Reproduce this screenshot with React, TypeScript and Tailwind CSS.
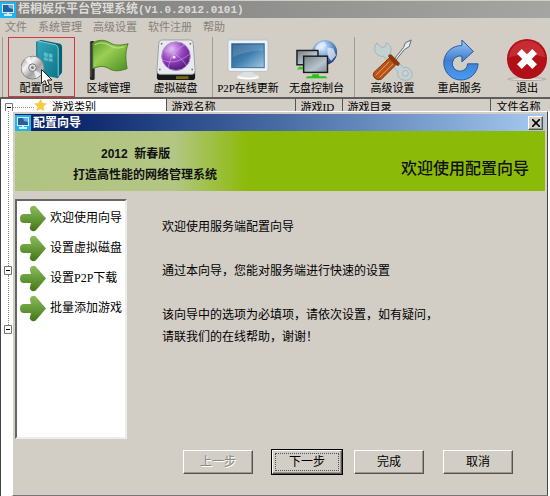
import React from 'react'

const MENUS = ['文件', '系统管理', '高级设置', '软件注册', '帮助']

const STEPS = ['欢迎使用向导', '设置虚拟磁盘', '设置P2P下载', '批量添加游戏']

const AppIcon: React.FC = () => (
  <svg className="size-4 shrink-0" viewBox="0 0 16 16" aria-hidden="true">
    <rect width="16" height="16" fill="#1fb4f0" />
    <rect x="2" y="2" width="12" height="9" fill="#d5ecf8" />
    <rect x="3" y="3" width="10" height="7" fill="#24609c" />
    <path d="M8 3h5v4L9 6z" fill="#79aad2" />
    <path d="M7 11h2v1h3v2H4v-2h3z" fill="#d5ecf8" />
  </svg>
)

const WizardIcon: React.FC = () => (
  <svg className="size-[42px]" viewBox="0 0 44 44" aria-hidden="true">
    <defs>
      <linearGradient id="box" x1="0" y1="0" x2="1" y2="1">
        <stop offset="0" stopColor="#35a9bb" />
        <stop offset="1" stopColor="#0c7488" />
      </linearGradient>
      <linearGradient id="disc" x1="0" y1="0" x2="1" y2="1">
        <stop offset="0" stopColor="#8f8f8f" />
        <stop offset="0.35" stopColor="#f4f4f4" />
        <stop offset="0.6" stopColor="#a2a2a2" />
        <stop offset="1" stopColor="#e4e4e4" />
      </linearGradient>
    </defs>
    <path d="M16 3l5-2 20 4q2 1 2 3v27l-4 5-23-4z" fill="#086074" />
    <path d="M17 2l19 4q3 1 3 4v31l-22-4z" fill="url(#box)" />
    <path d="M18 2l18 4q3 1 3 4v29" fill="none" stroke="#8ad6df" />
    <path d="M24 14l4 1v4l-4-1zM29 15l4 1v4l-4-1zM24 19l4 1v3l-4-1zM29 20l4 1v3l-4-1z" fill="#5dbcca" />
    <circle cx="12" cy="30" r="12" fill="url(#disc)" stroke="#858585" />
    <path d="M12 30L4 21l5-3zM12 30l9 7-5 4z" fill="#fff" opacity=".7" />
    <circle cx="12" cy="30" r="4" fill="#ddd" stroke="#777" />
    <circle cx="12" cy="30" r="1.5" fill="#777" />
  </svg>
)

const FlagIcon: React.FC = () => (
  <svg className="size-[42px]" viewBox="0 0 44 44" aria-hidden="true">
    <defs>
      <linearGradient id="flag" x1="0" y1="0" x2="1" y2="1">
        <stop offset="0" stopColor="#5b9a2c" />
        <stop offset="0.4" stopColor="#9bce55" />
        <stop offset="1" stopColor="#4a8d1e" />
      </linearGradient>
    </defs>
    <rect x="2" y="2" width="5" height="41" rx="2" fill="#252525" />
    <path d="M3 4v36" stroke="#666" />
    <path d="M5 4c8-4 13-3 18 0s10 3 19 1c-3 8-3 15-1 26-8 3-14 3-19 0s-10-3-17 0z" fill="url(#flag)" stroke="#457f1b" />
    <path d="M7 6c6-3 11-2 16 1s9 3 15 1" fill="none" stroke="#c3e595" />
  </svg>
)

const DriveIcon: React.FC = () => (
  <svg className="size-[42px]" viewBox="0 0 44 44" aria-hidden="true">
    <defs>
      <radialGradient id="orb" cx=".35" cy=".25" r=".8">
        <stop offset="0" stopColor="#e3c0f5" />
        <stop offset="0.5" stopColor="#9445bd" />
        <stop offset="1" stopColor="#4c1678" />
      </radialGradient>
    </defs>
    <path d="M2 33h40v7q0 3-3 3H5q-3 0-3-3z" fill="#171717" />
    <rect x="22" y="39" width="13" height="3" fill="#756619" />
    <path d="M7 1h30q2 0 3 3l2 29q0 4-3 4H5q-3 0-3-4L4 4q1-3 3-3z" fill="#e8ebed" stroke="#9ba0a4" />
    <circle cx="7" cy="5" r="1" fill="#777" />
    <circle cx="37" cy="5" r="1" fill="#777" />
    <circle cx="5" cy="32" r="1" fill="#777" />
    <circle cx="39" cy="32" r="1" fill="#777" />
    <circle cx="22" cy="18" r="15" fill="url(#orb)" stroke="#b98bd0" />
    <path d="M10 12c8 1 18 7 23 16M14 30c1-9 7-19 17-24M8 22c9 4 18 2 28-6" fill="none" stroke="#dba9f3" opacity=".6" />
    <circle cx="20" cy="19" r="1.5" fill="#f3ddff" />
  </svg>
)

const MonitorIcon: React.FC = () => (
  <svg className="size-[42px]" viewBox="0 0 44 44" aria-hidden="true">
    <defs>
      <linearGradient id="screen" x1="0" y1="0" x2="1" y2="1">
        <stop offset="0" stopColor="#1f5786" />
        <stop offset="0.5" stopColor="#3f7faf" />
        <stop offset="1" stopColor="#a2cae4" />
      </linearGradient>
    </defs>
    <path d="M17 32h10v4l6 2v3H11v-3l6-2z" fill="#dce0e3" />
    <path d="M11 40q11 3 22 0" stroke="#fff" strokeWidth="2" fill="none" />
    <rect x="1" y="1" width="42" height="33" rx="2" fill="#edf2f5" stroke="#b8c2c9" />
    <rect x="5" y="5" width="34" height="25" fill="url(#screen)" stroke="#386c94" />
    <path d="M6 6h32v6Q22 12 6 19z" fill="#fff" opacity=".15" />
  </svg>
)

const ConsoleIcon: React.FC = () => (
  <svg className="size-[42px]" viewBox="0 0 44 44" aria-hidden="true">
    <defs>
      <radialGradient id="globe" cx=".4" cy=".3" r=".7">
        <stop offset="0" stopColor="#e1f1ff" />
        <stop offset="0.5" stopColor="#7ba9db" />
        <stop offset="1" stopColor="#203f87" />
      </radialGradient>
      <linearGradient id="panel" x1="0" y1="0" x2="1" y2="1">
        <stop offset="0" stopColor="#737c84" />
        <stop offset="0.6" stopColor="#b8c5ce" />
        <stop offset="1" stopColor="#7f8a94" />
      </linearGradient>
    </defs>
    <circle cx="30" cy="14" r="13" fill="url(#globe)" />
    <path d="M21 8q4-5 9-5l2 4-5 2-3 5-5 2zM33 9l6 1 3 7-5 6-4-5z" fill="#e9f2f7" opacity=".7" />
    <path d="M3 29h6v3H1z" fill="#38cc22" />
    <rect x="1" y="12" width="22" height="15" fill="url(#panel)" stroke="#1b1b1b" strokeWidth="1.5" />
    <rect x="8" y="18" width="25" height="17" fill="url(#panel)" stroke="#1b1b1b" strokeWidth="1.5" />
    <path d="M17 37h7v2h7l2 2H10l2-2h5z" fill="#24c514" />
  </svg>
)

const ToolsIcon: React.FC = () => (
  <svg className="size-[42px]" viewBox="0 0 44 44" aria-hidden="true">
    <path d="M5 4l5 5 4-1 1-4c5 2 6 7 4 11l14 15c6-1 10 3 9 9-1 3-5 5-9 4-5-1-7-5-6-9L12 18c-6 1-10-4-9-10z" fill="#c3d1d3" stroke="#9fb4b8" />
    <circle cx="35" cy="36" r="3" fill="#d6d2cb" stroke="#9fb4b8" />
    <path d="M24 20L33 9l2-5 6-3-2 7-5 3-9 11z" fill="#e5edef" stroke="#59696c" />
    <path d="M19 18l8 8" stroke="#8d3709" strokeWidth="4" strokeLinecap="round" />
    <path d="M18 20l7 7-15 15q-4 2-7-1t-1-6z" fill="#b95418" stroke="#7e310a" />
    <path d="M18 24L4 38M22 26L8 40" stroke="#eda06c" />
  </svg>
)

const RestartIcon: React.FC = () => (
  <svg className="size-[42px]" viewBox="0 0 44 44" aria-hidden="true">
    <defs>
      <linearGradient id="restart" x1="0" y1="0" x2="0" y2="1">
        <stop offset="0" stopColor="#9bc7f4" />
        <stop offset="0.5" stopColor="#3f7fd2" />
        <stop offset="1" stopColor="#4a9cf0" />
      </linearGradient>
    </defs>
    <path d="M24 1l12 12-12 11v-6a8 8 0 1 0 6 8h11a18 18 0 1 1-17-19z" fill="url(#restart)" stroke="#27569d" strokeLinejoin="round" />
  </svg>
)

const ExitIcon: React.FC = () => (
  <svg className="size-[42px]" viewBox="0 0 44 44" aria-hidden="true">
    <ellipse cx="22" cy="42" rx="20" ry="1.5" fill="#eceae6" stroke="#aaa69f" />
    <circle cx="22" cy="21" r="21" fill="#b20f18" />
    <path d="M3 19C6-4 38-4 41 19q-19-5-38 0z" fill="#da4a4c" opacity=".5" />
    <path d="M14 13l16 16M30 13L14 29" stroke="#fff" strokeWidth="7" />
  </svg>
)

const ArrowIcon: React.FC = () => (
  <svg className="size-[27px] shrink-0" viewBox="0 0 27 27" aria-hidden="true">
    <defs>
      <linearGradient id="arrow" x1="0" y1="0" x2="0" y2="1">
        <stop offset="0" stopColor="#8bbd5c" />
        <stop offset="1" stopColor="#427717" />
      </linearGradient>
    </defs>
    <path d="M11 9L10 5q0-4 3-4 2-1 4 2l9 10.500-9 10.500q-2 3-5 2-3-2-2-4l1-4H4q-4 0-4-4.500T4 9z" fill="url(#arrow)" />
  </svg>
)

const StarIcon: React.FC = () => (
  <svg className="h-3 w-[13px]" viewBox="0 0 13 12" aria-hidden="true">
    <path d="M6.500 0l2 4 4.500.5-3.500 3 1 4.500-4-2-4 2 1-4.500L0 4.500 4.500 4z" fill="#f8c93c" />
  </svg>
)

const Pointer: React.FC = () => (
  <svg className="absolute top-[31px] left-8 h-[18px] w-3" viewBox="0 0 12 18" aria-hidden="true">
    <path d="M.5.5v14l3.500-3 2 5.500 2.500-1-2-5H11z" fill="#fff" stroke="#222" />
  </svg>
)

const TreeMark: React.FC = () => (
  <svg className="h-[9px] w-2 shrink-0" viewBox="0 0 8 9" aria-hidden="true">
    <path d="M.5.5h7v8h-7z" fill="#fff" stroke="#777" />
    <path d="M2 4.500h4" stroke="#000" />
  </svg>
)

const TOOLS = [
  { label: '配置向导', icon: <WizardIcon />, box: 'w-[67px] border-[#d8363c]', group: 'border-l border-[#a19d96] pl-[5px]' },
  { label: '区域管理', icon: <FlagIcon />, box: 'w-[67px] border-transparent', group: '' },
  { label: '虚拟磁盘', icon: <DriveIcon />, box: 'w-[67px] border-transparent', group: '' },
  { label: 'P2P在线更新', icon: <MonitorIcon />, box: 'w-[70px] border-transparent', group: 'ml-[3px] border-l border-[#a19d96]' },
  { label: '无盘控制台', icon: <ConsoleIcon />, box: 'w-[67px] border-transparent', group: '' },
  { label: '高级设置', icon: <ToolsIcon />, box: 'w-[67px] border-transparent', group: 'ml-1 border-l border-[#a19d96] pl-1' },
  { label: '重启服务', icon: <RestartIcon />, box: 'w-[67px] border-transparent', group: '' },
  { label: '退出', icon: <ExitIcon />, box: 'w-12 border-transparent', group: 'ml-[10px]' },
]

const raised =
  'border border-t-white border-l-white border-r-[#55534f] border-b-[#55534f] shadow-[inset_-1px_-1px_0_#9b9790]'

const GameTable: React.FC = () => (
  <div className="h-3 overflow-hidden">
    <table className="w-full table-fixed border-collapse text-left text-[11px] leading-4 whitespace-nowrap">
      <thead>
        <tr className="bg-[#d2cdc5]">
          <th className="w-[165px] bg-white p-0 font-normal">
            <span className="flex items-start pl-1">
              <span className="flex items-center pt-1">
                <TreeMark />
                <span className="w-[21px] border-t border-dotted border-[#888]" />
              </span>
              <span className="flex items-start gap-[5px]">
                <StarIcon />
                游戏类别
              </span>
            </span>
          </th>
          <th className="w-[129px] border-l border-[#555] p-0 pl-[5px] font-normal">游戏名称</th>
          <th className="w-[47px] border-l border-[#555] p-0 pl-[5px] font-normal">游戏ID</th>
          <th className="w-[148px] border-l border-[#555] p-0 pl-[5px] font-normal">游戏目录</th>
          <th className="border-l border-[#555] p-0 pl-[6px] font-normal">文件名称</th>
        </tr>
      </thead>
    </table>
  </div>
)

const Dialog: React.FC = () => (
  <section
    aria-label="配置向导"
    className="flex min-w-0 flex-1 flex-col border border-t-white border-l-white border-r-[#444] border-b-[#777] bg-[#d2cdc5] p-[2px]"
  >
    <header className="flex h-[17px] items-center gap-[2px] bg-linear-to-r from-[#0b246a] from-10% to-[#a6caf0] text-xs font-bold text-white">
      <AppIcon />
      <h2 className="flex-1">配置向导</h2>
      <button type="button" aria-label="关闭" className={`mr-[2px] flex h-[14px] w-[15px] items-center justify-center bg-[#d2cdc5] ${raised}`}>
        <svg className="size-2" viewBox="0 0 8 8" aria-hidden="true">
          <path d="M0 0l8 8M8 0L0 8" stroke="#000" strokeWidth="1.6" />
        </svg>
      </button>
    </header>
    <div className="flex h-[60px] items-start justify-between bg-[linear-gradient(90deg,#b0c382_0%,#b3c684_30%,#8cba08_44%,#8cba08_100%)] pr-4 pl-[58px] font-['Liberation_Sans','Noto_Sans_CJK_SC',sans-serif] text-[#111]">
      <div className="pt-[13px] text-xs leading-[21px] font-bold">
        <p className="pl-7 whitespace-pre">2012  新春版</p>
        <p>打造高性能的网络管理系统</p>
      </div>
      <p className="pt-[26px] text-base leading-6 font-medium">欢迎使用配置向导</p>
    </div>
    <div className="flex pt-2">
      <ol className="h-[240px] w-28 shrink-0 border-2 border-t-[#666] border-l-[#666] border-r-[#efede9] border-b-[#efede9] bg-white pt-[2px] pl-[3px]">
        {STEPS.map((step) => (
          <li key={step} className="flex h-[30px] items-center gap-[3px] text-xs whitespace-nowrap">
            <ArrowIcon />
            {step}
          </li>
        ))}
      </ol>
      <div className="flex flex-col gap-[22px] pt-[17px] pl-[35px] text-xs leading-[22px] whitespace-nowrap">
        <p>欢迎使用服务端配置向导</p>
        <p>通过本向导，您能对服务端进行快速的设置</p>
        <p>
          该向导中的选项为必填项，请依次设置，如有疑问，
          <br />
          请联我们的在线帮助，谢谢！
        </p>
      </div>
    </div>
    <footer className="flex pt-[11px] pl-[168px] text-xs">
      <button type="button" disabled className={`h-6 w-[70px] text-[#8b8882] [text-shadow:1px_1px_0_#fff] ${raised}`}>
        上一步
      </button>
      <button type="button" className={`ml-[19px] h-6 w-[70px] p-[2px] outline outline-black ${raised}`}>
        <span className="block border border-dotted border-[#555] leading-4">下一步</span>
      </button>
      <button type="button" className={`ml-3 h-6 w-[70px] ${raised}`}>完成</button>
      <button type="button" className={`ml-[19px] h-6 w-[70px] ${raised}`}>取消</button>
    </footer>
  </section>
)

export default function App() {
  return (
    <main className="flex min-h-screen flex-col bg-[#d2cdc5] font-['Liberation_Serif','Noto_Sans_CJK_SC',sans-serif] text-black">
      <header className="mt-px flex h-[17px] items-center gap-[2px] bg-linear-to-r from-[#7d7d7d] to-[#a5a5a3] font-['Liberation_Mono','Noto_Sans_CJK_SC',monospace] text-[#dedbd5]">
        <AppIcon />
        <h1 className="text-xs font-bold whitespace-nowrap">
          梧桐娱乐平台管理系统<span className="text-[11px]">(V1.0.2012.0101)</span>
        </h1>
      </header>
      <nav className="flex h-[19px] items-center gap-[11px] pl-[5px] text-[11px] text-[#85827c]">
        {MENUS.map((menu) => (
          <button key={menu} type="button">{menu}</button>
        ))}
      </nav>
      <div className="flex h-[62px] border-b-2 border-[#5f5d59] pl-[2px]">
        {TOOLS.map(({ label, icon, box, group }, i) => (
          <div key={label} className={group}>
            <button
              type="button"
              className={`relative flex h-[60px] flex-col items-center border pt-px text-[11px] leading-[15px] whitespace-nowrap ${box}`}
            >
              {icon}
              {label}
              {i === 0 && <Pointer />}
            </button>
          </div>
        ))}
      </div>
      <div className="flex flex-1 flex-col border-l border-[#444] bg-white">
        <GameTable />
        <div className="flex flex-1 pr-[2px]">
          {/* Tree gutter left visible beside the dialog */}
          <div className="flex w-[11px] flex-col pl-[3px]">
            <span className="ml-1 h-[155px] border-l border-dotted border-[#888]" />
            <TreeMark />
            <span className="ml-1 h-[50px] border-l border-dotted border-[#888]" />
            <TreeMark />
          </div>
          <Dialog />
        </div>
      </div>
    </main>
  )
}
